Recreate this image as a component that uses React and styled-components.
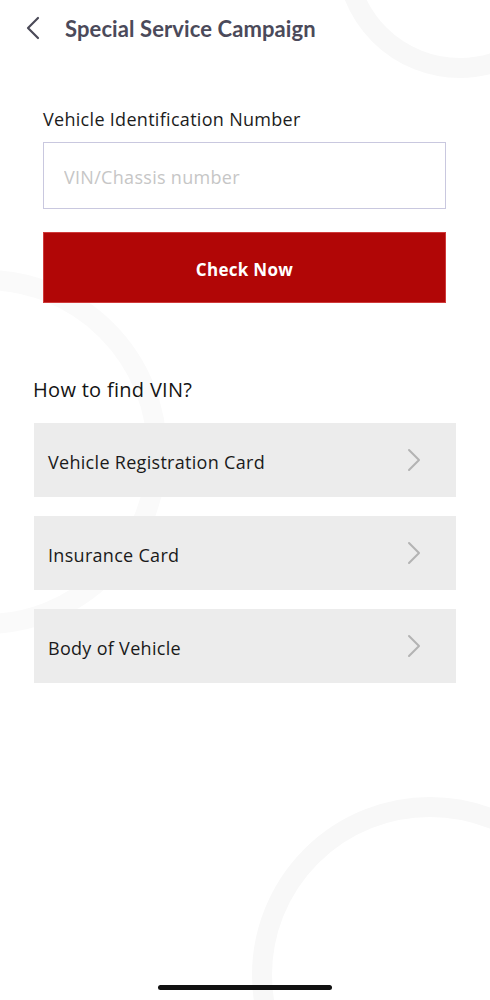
import React from "react";
import styled, { createGlobalStyle } from "styled-components";

const Global = createGlobalStyle`
  html, body { margin: 0; padding: 0; background: #fff; }
  body { font-family: "Open Sans", "Noto Sans", sans-serif; -webkit-font-smoothing: antialiased; }
  * { box-sizing: border-box; }
`;

const Screen = styled.div`
  position: relative;
  width: 490px;
  height: 1000px;
  overflow: hidden;
  background: #fff;
`;

const Ring = styled.div`
  position: absolute;
  left: ${(p) => p.$cx - p.$r}px;
  top: ${(p) => p.$cy - p.$r}px;
  width: ${(p) => p.$r * 2}px;
  height: ${(p) => p.$r * 2}px;
  border-radius: 50%;
  border: 20px solid ${(p) => p.$tone};
  pointer-events: none;
`;

const Content = styled.div`
  position: relative;
  display: flex;
  flex-direction: column;
`;

const Header = styled.header`
  display: flex;
  align-items: center;
  height: 56px;
  padding-left: 24px;
  gap: 23px;
`;

const BackButton = styled.button`
  display: flex;
  align-items: center;
  justify-content: center;
  width: 18px;
  height: 24px;
  padding: 0;
  border: 0;
  background: none;
  color: #4b4a58;
`;

const Title = styled.h1`
  margin: 0;
  font-family: Lato, "Open Sans", sans-serif;
  font-size: 22px;
  font-weight: 700;
  color: #4b4a5a;
  letter-spacing: 0.1px;
`;

const Form = styled.section`
  display: flex;
  flex-direction: column;
  padding: 51px 44px 0 43px;
`;

const Label = styled.label`
  font-size: 18px;
  letter-spacing: 0.3px;
  color: #1c1c1c;
  line-height: 24px;
  margin-bottom: 11px;
`;

const Input = styled.input`
  width: 100%;
  height: 67px;
  border: 1px solid #c9c8df;
  border-radius: 0;
  padding: 2px 20px 0;
  font-family: inherit;
  font-size: 18px;
  letter-spacing: 0.3px;
  color: #222;
  background: #fff;
  outline: none;
  &::placeholder { color: #c6c6c6; }
`;

const PrimaryButton = styled.button`
  margin-top: 23px;
  width: 100%;
  height: 71px;
  padding-top: 5px;
  background: #b10606;
  border: 1px solid #cf3a3a;
  color: #fff;
  font-family: inherit;
  font-size: 17px;
  letter-spacing: 0.3px;
  font-weight: 700;
`;

const Help = styled.section`
  display: flex;
  flex-direction: column;
  padding: 74px 34px 0 34px;
`;

const HelpTitle = styled.h2`
  margin: 0 0 0 -1px;
  font-size: 20px;
  letter-spacing: 0.3px;
  font-weight: 400;
  color: #141414;
  line-height: 26px;
`;

const List = styled.div`
  display: flex;
  flex-direction: column;
  gap: 19px;
  margin-top: 20px;
`;

const Row = styled.button`
  display: flex;
  align-items: center;
  justify-content: space-between;
  height: 74px;
  padding: 0 34px 0 14px;
  border: 0;
  background: #ececec;
  font-family: inherit;
  font-size: 18px;
  letter-spacing: 0.3px;
  color: #1a1a1a;
  text-align: left;
`;

const RowText = styled.span`
  padding-top: 3px;
`;

const Chevron = styled.svg`
  width: 16px;
  height: 24px;
  color: #b3b3b3;
`;

const HomeIndicator = styled.div`
  position: absolute;
  left: 158px;
  bottom: 10px;
  width: 174px;
  height: 5px;
  border-radius: 3px;
  background: #111;
`;

const items = ["Vehicle Registration Card", "Insurance Card", "Body of Vehicle"];

export default function App() {
  return (
    <Screen>
      <Global />
      <Ring $cx={460} $cy={-46} $r={124} $tone="#f8f8f8" />
      <Ring $cx={-15} $cy={452} $r={182} $tone="#fafafa" />
      <Ring $cx={430} $cy={975} $r={178} $tone="#f8f8f8" />
      <Content>
        <Header>
          <BackButton aria-label="Back">
            <svg width="14" height="24" viewBox="0 0 14 24" fill="none">
              <path d="M12 2 L2 12 L12 22" stroke="currentColor" strokeWidth="2.2" strokeLinecap="round" strokeLinejoin="round" />
            </svg>
          </BackButton>
          <Title>Special Service Campaign</Title>
        </Header>
        <Form>
          <Label htmlFor="vin">Vehicle Identification Number</Label>
          <Input id="vin" placeholder="VIN/Chassis number" />
          <PrimaryButton>Check Now</PrimaryButton>
        </Form>
        <Help>
          <HelpTitle>How to find VIN?</HelpTitle>
          <List>
            {items.map((t) => (
              <Row key={t}>
                <RowText>{t}</RowText>
                <Chevron viewBox="0 0 16 24" fill="none">
                  <path d="M3 2 L13 12 L3 22" stroke="currentColor" strokeWidth="2" strokeLinecap="round" strokeLinejoin="round" />
                </Chevron>
              </Row>
            ))}
          </List>
        </Help>
      </Content>
      <HomeIndicator />
    </Screen>
  );
}
